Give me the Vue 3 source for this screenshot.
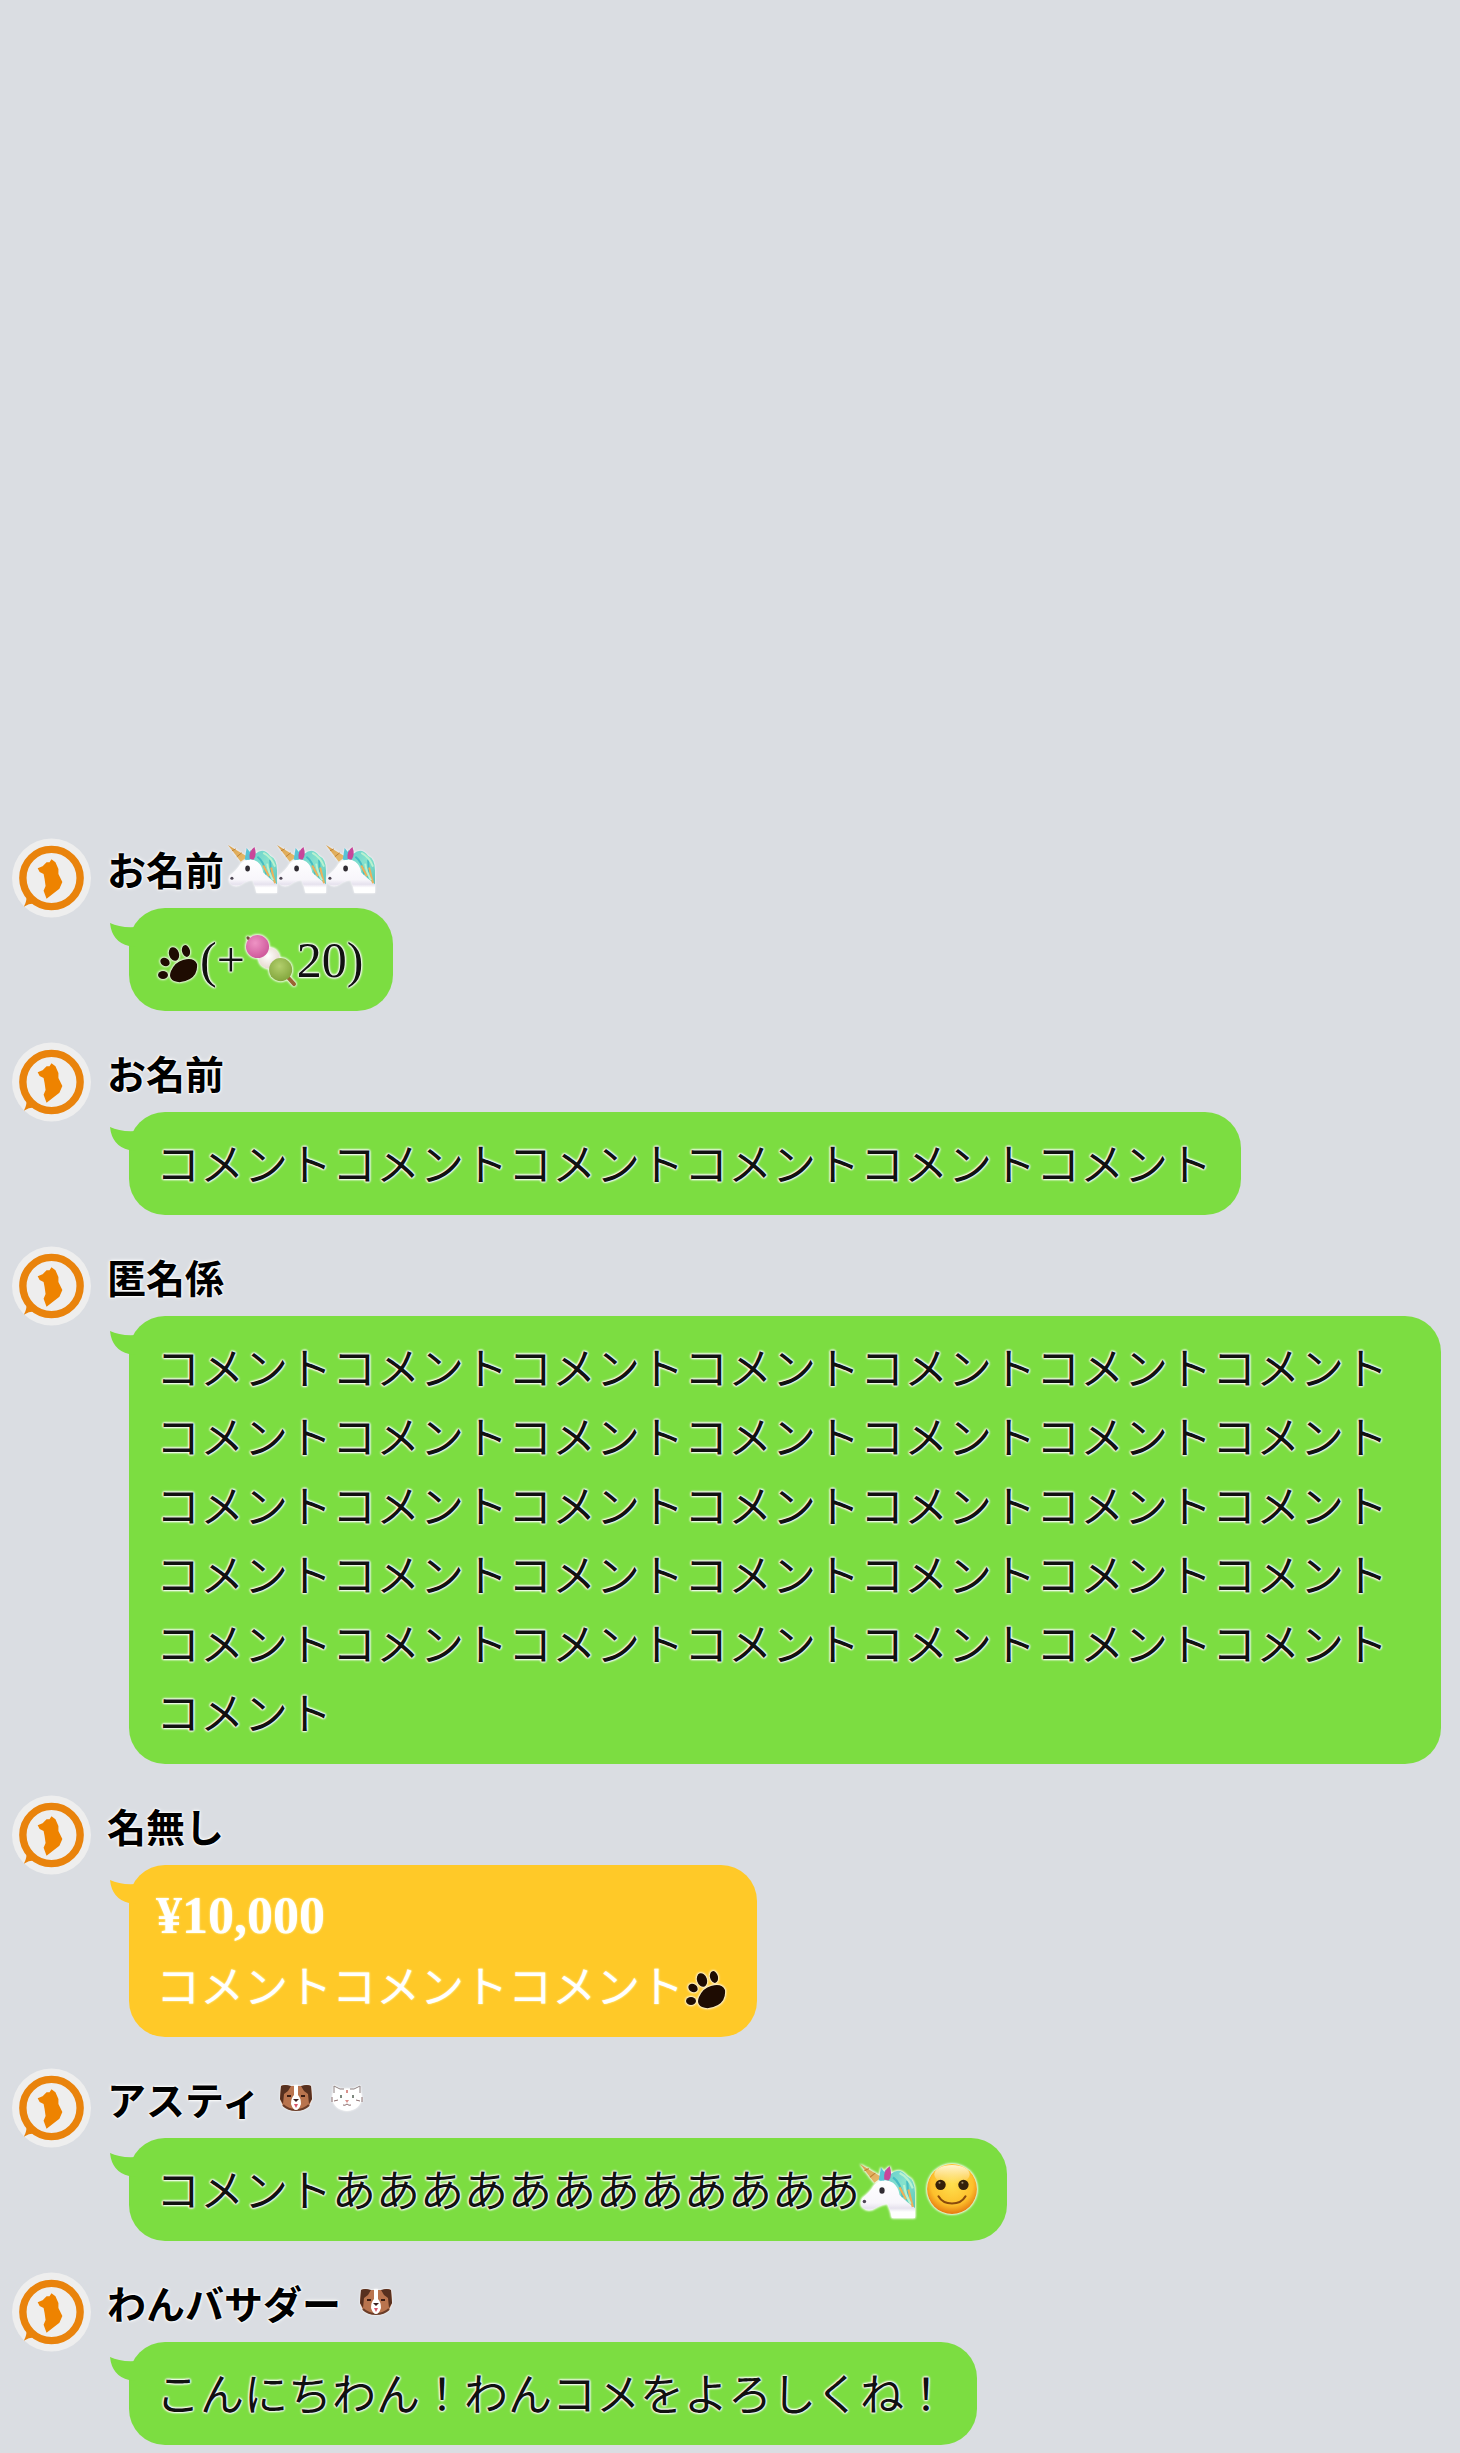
<script setup>
const rep = (n) => 'コメント'.repeat(n)

const t = (text) => ({ kind: 'text', text })
const l = (text) => ({ kind: 'latin', text })
const i = (name) => ({ kind: 'icon', name })

const comments = [
  { name: 'お名前', emoji: ['unicorn', 'unicorn', 'unicorn'], badges: [], body: [i('paw'), l('(+'), i('dango'), l('20)')] },
  { name: 'お名前', emoji: [], badges: [], body: [t(rep(6))] },
  { name: '匿名係', emoji: [], badges: [], body: [t(rep(36))] },
  { name: '名無し', emoji: [], badges: [], price: '¥10,000', body: [t(rep(3)), i('paw')] },
  { name: 'アスティ', emoji: [], badges: ['dog', 'cat'], body: [t('コメントああああああああああああ'), i('unicorn'), i('smile')] },
  { name: 'わんバサダー', emoji: [], badges: ['dog'], body: [t('こんにちわん！わんコメをよろしくね！')] }
]
</script>

<template>
  <main class="chat">
    <svg class="defs" aria-hidden="true">
      <defs>
        <linearGradient id="horn" x1="0" y1="0" x2="1" y2="1">
          <stop offset="0" stop-color="#d9a04c" /><stop offset="1" stop-color="#e9bd6e" />
        </linearGradient>
        <linearGradient id="mane" x1="0" y1="0" x2="1" y2="1">
          <stop offset="0" stop-color="#5fc8cc" /><stop offset=".5" stop-color="#86e2cd" /><stop offset="1" stop-color="#5cc4bb" />
        </linearGradient>
        <linearGradient id="coat" x1="0" y1="0" x2="0" y2="1">
          <stop offset="0" stop-color="#ffffff" /><stop offset=".6" stop-color="#f8f6fb" /><stop offset=".74" stop-color="#e6e2ee" /><stop offset=".84" stop-color="#ffffff" />
        </linearGradient>
        <radialGradient id="face" cx=".5" cy=".4" r=".6">
          <stop offset="0" stop-color="#ffe04e" /><stop offset=".7" stop-color="#fdc02c" /><stop offset="1" stop-color="#e57a10" />
        </radialGradient>
        <linearGradient id="shine" x1="0" y1="0" x2="0" y2="1">
          <stop offset="0" stop-color="#fff6d0" /><stop offset="1" stop-color="#fff6d0" stop-opacity="0" />
        </linearGradient>
        <radialGradient id="pinkball" cx=".4" cy=".35" r=".65">
          <stop offset="0" stop-color="#ee93c4" /><stop offset="1" stop-color="#cf5a9c" />
        </radialGradient>
        <radialGradient id="whiteball" cx=".45" cy=".4" r=".65">
          <stop offset="0" stop-color="#ffffff" /><stop offset="1" stop-color="#e4d6cb" />
        </radialGradient>
        <radialGradient id="greenball" cx=".45" cy=".35" r=".65">
          <stop offset="0" stop-color="#b3cf6d" /><stop offset="1" stop-color="#83a63d" />
        </radialGradient>
      </defs>
      <symbol id="avatar" viewBox="0 0 80 80">
        <circle cx="40" cy="40" r="40" fill="#eeeeee" />
        <circle cx="40" cy="40" r="29" fill="none" stroke="#e9830c" stroke-width="7.500" />
        <path d="M14 56 Q16 62 12 69 Q18 65 25 66 Z" fill="#e9830c" />
        <path d="M26 30 L31 28 L35 24 L38 24 L40 21 L44 24 L47 31 L47 36 L51 44 L48 51 L35 61 L32 53 L34 48 L33 41 L32 36 L28 34 Z" fill="#ee8300" />
      </symbol>
      <symbol id="unicorn" viewBox="0 0 50 50">
        <path d="M18 17 L23 6 L28 10 Q36 3 43 12 Q50 15 50 27 L50 42 L42 38 L28 22 Z" fill="url(#mane)" />
        <path d="M17 17 Q24 14 30 18 Q35 22 36 29 Q42 35 50 41 V50 H29 Q28 43 25 37 Q18 38 14 41 Q8 45 3 41 Q-1 38 2 32 Q9 27 13 20 Z" fill="url(#coat)" />
        <path d="M30 13 Q37 18 39 31 M43 16 Q44 26 43 34" fill="none" stroke="#45bdc4" stroke-width="2" />
        <path d="M36 22 Q39 28 42 33 M44 24 Q46 32 48 40" fill="none" stroke="#efb05a" stroke-width="2" />
        <path d="M36 9 Q44 13 48 23 M40 20 Q41 28 46 37" fill="none" stroke="#b9f2cf" stroke-width="2" />
        <path d="M0 1 L20 13 L13 18 Z" fill="url(#horn)" />
        <path d="M4 7 L8 5 M9 13 L14 9" stroke="#bf8234" stroke-width="1" />
        <path d="M17 16 L19 4 L23 9 L22 16 Z" fill="#58c3d6" />
        <path d="M22 15 Q21 7 27 3 Q30 11 26 16 Z" fill="#c8459a" />
        <ellipse cx="20" cy="25" rx="2.400" ry="3" fill="#302c32" />
        <circle cx="4" cy="35" r="1.600" fill="#4e4654" />
      </symbol>
      <symbol id="paw" viewBox="0 0 44 44">
        <g fill="#1e0c02">
          <path d="M15 29 Q19 20 27 18 Q38 15 41 22 Q42 32 34 37 Q25 42 18 39 Q12 36 15 29 Z" />
          <ellipse cx="18" cy="12" rx="5" ry="7" transform="rotate(-18 18 12)" />
          <ellipse cx="30" cy="9" rx="4" ry="6" transform="rotate(-15 30 9)" />
          <ellipse cx="9" cy="20" rx="5" ry="4" transform="rotate(35 9 20)" />
          <ellipse cx="7" cy="33" rx="5" ry="4" />
        </g>
      </symbol>
      <symbol id="dango" viewBox="0 0 54 54">
        <path d="M3 3 L8 8" stroke="#6e4c34" stroke-width="3" stroke-linecap="round" />
        <path d="M40 39 L51 51" stroke="#9a6432" stroke-width="4" stroke-linecap="round" />
        <circle cx="25" cy="24" r="11" fill="url(#whiteball)" />
        <circle cx="13" cy="12" r="12" fill="url(#pinkball)" />
        <circle cx="37" cy="36" r="12" fill="url(#greenball)" />
      </symbol>
      <symbol id="smile" viewBox="0 0 50 50">
        <circle cx="25" cy="25" r="24" fill="url(#face)" />
        <ellipse cx="25" cy="11" rx="17" ry="9" fill="url(#shine)" />
        <circle cx="14" cy="21" r="5" fill="#35210a" />
        <circle cx="36" cy="21" r="5" fill="#35210a" />
        <circle cx="13" cy="19" r="1" fill="#a08a60" />
        <circle cx="35" cy="19" r="1" fill="#a08a60" />
        <path d="M12 32 Q16 39 25 39 Q34 39 38 32" fill="none" stroke="#8a4a0c" stroke-width="2" stroke-linecap="round" />
      </symbol>
      <symbol id="dog" viewBox="0 0 32 28">
        <path d="M1 2 Q5 0 9 2 H23 Q27 0 31 2 L32 15 L29 22 Q24 26 16 26 Q8 26 3 22 L0 15 Z" fill="#b9744e" />
        <path d="M1 2 Q5 0 11 2 L8 7 L4 10 L3 20 L0 15 Z M31 2 Q27 0 21 2 L24 7 L28 10 L29 20 L32 15 Z" fill="#57301f" />
        <path d="M3 21 Q8 26 16 26 Q24 26 29 21" fill="none" stroke="#6b3d28" stroke-width="2" />
        <path d="M14 1 H18 L18 11 Q21 14 21 20 Q19 26 16 26 Q13 26 11 20 Q11 14 14 11 Z" fill="#fff" />
        <path d="M13 15 H19 L16 18 Z" fill="#3a2020" />
        <path d="M14 20 H18 L16 24 Z" fill="#d8566a" />
        <path d="M7 12 H11 M21 12 H25" stroke="#3a1c12" stroke-width="2" />
      </symbol>
      <symbol id="cat" viewBox="0 0 32 28">
        <path d="M3 1 L10 5 Q16 4 22 5 L29 1 L31 14 Q29 26 16 27 Q3 26 1 14 Z" fill="#fff" />
        <path d="M3 9 V2 L9 5 L13 5 M19 5 L23 5 L29 2 V9" fill="none" stroke="#8d8080" stroke-width="1" />
        <path d="M10 11 V14 M22 11 V14" stroke="#7f8a80" stroke-width="2" />
        <path d="M14 16 H18 L16 19 Z M15 6 H17 V9 H15 Z" fill="#d9908c" />
        <path d="M1 13 V18 M31 13 V18 M3 17 L7 16 M29 17 L25 16 M12 21 Q14 22 16 20 Q18 22 20 21" fill="none" stroke="#8d7070" stroke-width="1" />
      </symbol>
    </svg>

    <ul class="list">
      <li v-for="(c, n) in comments" :key="n" class="comment">
        <svg class="avatar" role="img" aria-label="わんコメ"><use href="#avatar" /></svg>
        <div class="content">
          <div class="name">
            <span>{{ c.name }}</span>
            <div v-if="c.emoji.length" class="name-emojis">
              <svg v-for="(e, k) in c.emoji" :key="k" class="name-emoji"><use :href="'#' + e" /></svg>
            </div>
            <svg v-for="b in c.badges" :key="b" class="badge"><use :href="'#' + b" /></svg>
          </div>
          <div class="bubble" :class="{ paid: c.price }">
            <svg class="tail" viewBox="0 0 26 24"><path d="M0 0 Q10 5 26 4 L26 24 L19 23 Q2 19 0 0 Z" /></svg>
            <p v-if="c.price" class="price">{{ c.price }}</p>
            <p class="text"><template v-for="(p, k) in c.body" :key="k"><svg v-if="p.kind === 'icon'" class="icon" :class="p.name"><use :href="'#' + p.name" /></svg><span v-else :class="p.kind">{{ p.text }}</span></template></p>
          </div>
        </div>
      </li>
    </ul>
  </main>
</template>

<style>
body {
  margin: 0;
  background: #dadde2;
}
</style>

<style scoped>
.chat {
  box-sizing: border-box;
  min-height: 100vh;
  padding: 0 19px 8px 12px;
  display: flex;
  flex-direction: column;
  justify-content: flex-end;
  font-family: "Noto Sans CJK JP", sans-serif;
  color: #111;
}
.defs {
  position: absolute;
  width: 0;
  height: 0;
}
.list {
  margin: 0;
  padding: 0;
  list-style: none;
  display: flex;
  flex-direction: column;
  gap: 31px;
}
.comment {
  display: flex;
  align-items: flex-start;
  gap: 16px;
}
.avatar {
  flex: none;
  width: 79px;
  height: 80px;
}
.content {
  flex: 1;
  min-width: 0;
  display: flex;
  flex-direction: column;
  align-items: flex-start;
  gap: 10px;
}
.name {
  display: flex;
  align-items: center;
  height: 60px;
  font-size: 39px;
  font-weight: 700;
  line-height: 60px;
  color: #000;
  text-shadow: 0 0 2px #fff, 0 0 2px #fff, 0 0 2px #fff, 0 0 4px #fff;
}
.name-emojis {
  display: flex;
  margin-left: 4px;
}
.name-emoji {
  width: 49px;
  height: 49px;
  filter: drop-shadow(0 0 1px #fff);
}
.badge {
  width: 32px;
  height: 28px;
  margin-left: 19px;
  filter: drop-shadow(0 0 1px #fff);
}
.bubble {
  position: relative;
  margin-left: 22px;
  padding: 16px 29px 18px 27px;
  border-radius: 36px;
  background: #7cdd41;
  font-size: 44px;
  line-height: 69px;
  text-shadow: 0 0 2px #fff, 0 0 2px #fff, 0 0 2px #fff, 0 0 3px #fff, 0 0 3px #fff;
}
.bubble p {
  margin: 0;
}
.text {
  font-weight: 400;
  word-break: break-all;
}
.latin,
.bubble .price {
  font-family: "Liberation Serif", serif;
  font-size: 50px;
}
.latin {
  line-height: 1;
}
.bubble .price {
  font-size: 52px;
  font-weight: 700;
}
.bubble.paid {
  background: #ffc928;
  color: #fff;
  text-shadow: 0 0 2px #fffbd0;
}
.tail {
  position: absolute;
  left: -19px;
  top: 15px;
  width: 26px;
  height: 24px;
  fill: #7cdd41;
}
.paid .tail {
  fill: #ffc928;
}
.icon {
  filter: drop-shadow(0 0 1px #fff) drop-shadow(0 0 1px #fff);
}
.paw {
  width: 44px;
  height: 44px;
  vertical-align: -9px;
}
.dango {
  width: 52px;
  height: 52px;
  vertical-align: -10px;
}
.unicorn {
  width: 55px;
  height: 55px;
  vertical-align: -11px;
}
.smile {
  width: 52px;
  height: 52px;
  margin-left: 11px;
  vertical-align: -8px;
}
</style>
